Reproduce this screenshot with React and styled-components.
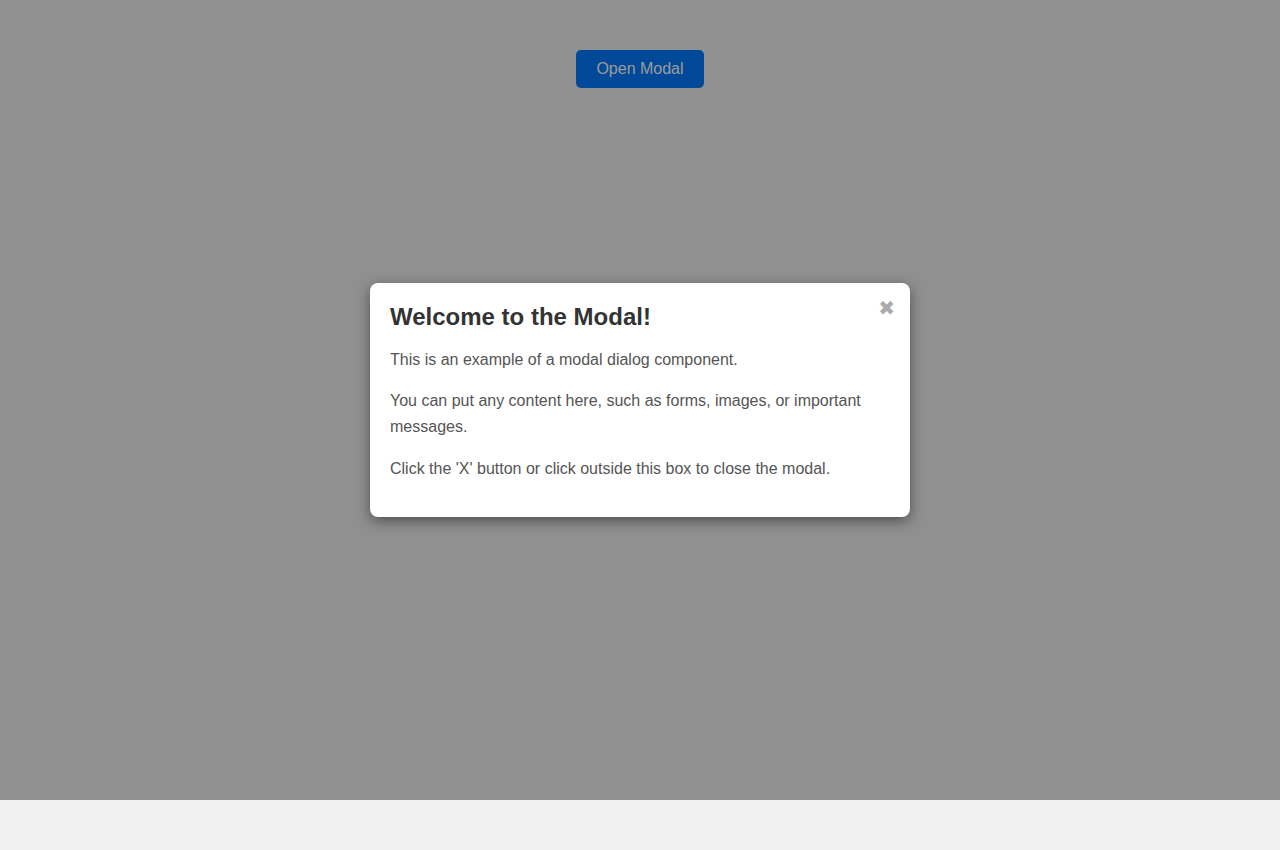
import React, { useState } from "react";
import styled, { createGlobalStyle } from "styled-components";

const Global = createGlobalStyle`
  html, body { margin: 0; padding: 0; }
  body {
    background: #f0f0f0;
    font-family: "Liberation Sans", Arial, Helvetica, sans-serif;
  }
`;

const Page = styled.div`
  position: relative;
  min-height: 800px;
  display: flex;
  flex-direction: column;
  align-items: center;
  padding-top: 50px;
  box-sizing: border-box;
`;

const OpenButton = styled.button`
  font-family: "Liberation Sans", Arial, sans-serif;
  font-size: 16px;
  line-height: 18px;
  padding: 10px 20px;
  border: none;
  border-radius: 5px;
  background: #007bff;
  color: #fff;
  cursor: pointer;
`;

const Overlay = styled.div`
  position: absolute;
  inset: 0;
  background: rgba(0, 0, 0, 0.4);
  display: flex;
  align-items: center;
  justify-content: center;
`;

const Dialog = styled.div`
  position: relative;
  width: 500px;
  padding: 20px;
  background: #fff;
  border-radius: 8px;
  box-shadow: 0 4px 14px rgba(0, 0, 0, 0.45);
`;

const Title = styled.h2`
  margin: 0;
  font-size: 24px;
  font-weight: bold;
  color: #333;
`;

const Text = styled.p`
  margin: 16px 0;
  font-size: 16px;
  line-height: 1.6;
  color: #555;
`;

const Close = styled.button`
  position: absolute;
  top: 13px;
  right: 15px;
  padding: 0;
  border: none;
  background: none;
  color: #aaa;
  font-size: 20px;
  line-height: 24px;
  font-family: "DejaVu Sans", sans-serif;
  cursor: pointer;
`;

export default function App() {
  const [open, setOpen] = useState(true);
  return (
    <>
      <Global />
      <Page>
        <OpenButton onClick={() => setOpen(true)}>Open Modal</OpenButton>
        {open && (
          <Overlay onClick={() => setOpen(false)}>
            <Dialog onClick={(e) => e.stopPropagation()}>
              <Close onClick={() => setOpen(false)} aria-label="Close">✖</Close>
              <Title>Welcome to the Modal!</Title>
              <Text>This is an example of a modal dialog component.</Text>
              <Text>
                You can put any content here, such as forms, images, or important
                messages.
              </Text>
              <Text>Click the 'X' button or click outside this box to close the modal.</Text>
            </Dialog>
          </Overlay>
        )}
      </Page>
    </>
  );
}
